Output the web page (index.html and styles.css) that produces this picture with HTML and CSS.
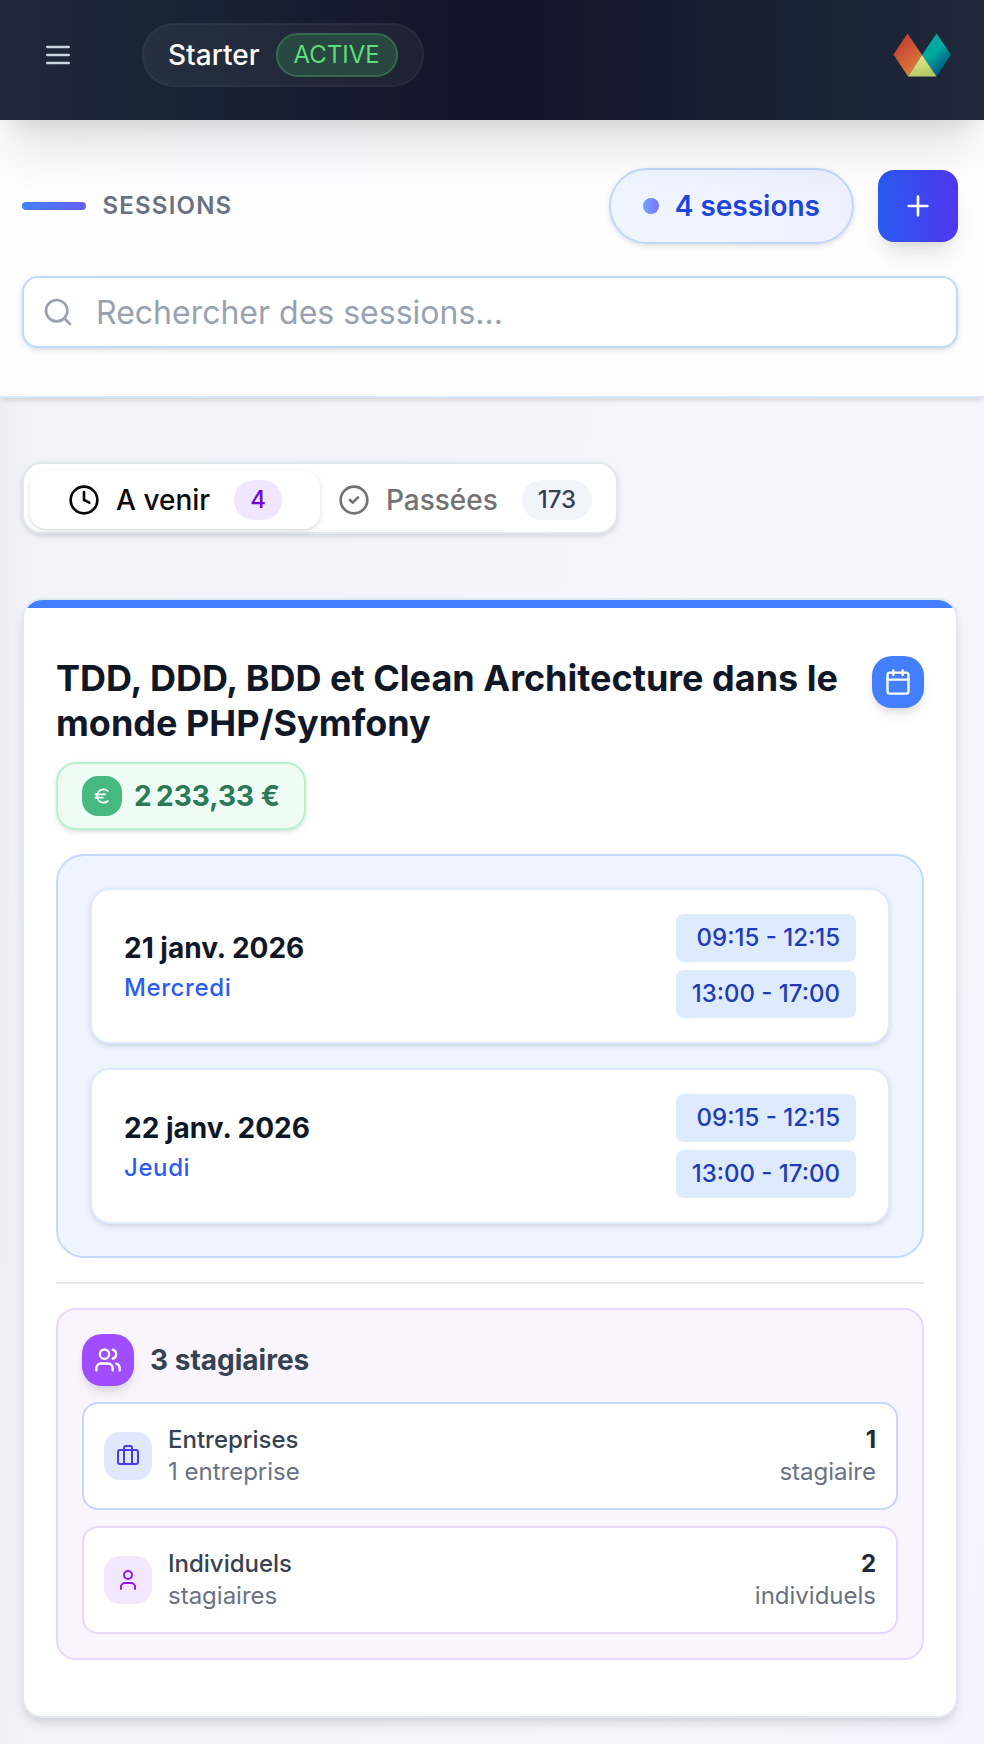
FILE: index.html
```html
<!DOCTYPE html>
<html lang="fr">
<head>
  <meta charset="utf-8">
  <title>Sessions</title>
  <link rel="stylesheet" href="styles.css">
</head>

<body>
  <header class="topbar">
    <button class="menu-button" aria-label="Menu">
      <svg class="icon icon-32" viewBox="0 0 24 24"><path d="M4 6h16M4 12h16M4 18h16"/></svg>
    </button>
    <div class="plan">
      <span class="plan-name">Starter</span>
      <span class="plan-status">ACTIVE</span>
    </div>
    <div class="logo">
      <svg width="58" height="44" viewBox="0 0 58 44">
        <defs>
          <linearGradient id="red" x1="0" y1="0" x2="0.6" y2="1">
            <stop offset="0.3" stop-color="#c74634"/>
            <stop offset="1" stop-color="#dc7c3c"/>
          </linearGradient>
          <linearGradient id="teal" x1="0.2" y1="0.2" x2="0.7" y2="1">
            <stop offset="0.35" stop-color="#00a9a0"/>
            <stop offset="0.9" stop-color="#005580"/>
          </linearGradient>
          <linearGradient id="yellow" x1="0" y1="0" x2="0.3" y2="1">
            <stop offset="0.2" stop-color="#e3e58c"/>
            <stop offset="1" stop-color="#b5cc66"/>
          </linearGradient>
        </defs>
        <path d="M14.5 0.5L29 22L15 43.5L0.5 21.5z" fill="url(#red)"/>
        <path d="M43.5 0.5L58 21.5L43.5 43.5L29 22z" fill="url(#teal)"/>
        <path d="M29 22L43.5 43.5H15z" fill="url(#yellow)"/>
      </svg>
    </div>
  </header>

  <section class="page-header">
    <div class="title-row">
      <span class="accent"></span>
      <h1 class="page-title">SESSIONS</h1>
      <div class="count"><span class="dot"></span>4 sessions</div>
      <button class="add-button" aria-label="Ajouter">
        <svg class="icon icon-32" viewBox="0 0 24 24"><path d="M5 12h14M12 5v14"/></svg>
      </button>
    </div>
    <div class="search">
      <svg class="icon icon-32" viewBox="0 0 24 24"><circle cx="11" cy="11" r="8"/><path d="m21 21-4.3-4.3"/></svg>
      <input type="text" placeholder="Rechercher des sessions...">
    </div>
  </section>

  <main class="content">
    <div class="tabs">
      <button class="tab active">
        <svg class="icon icon-32" viewBox="0 0 24 24"><circle cx="12" cy="12" r="10"/><path d="M12 6v6l4 2"/></svg>
        <span>A venir</span>
        <span class="tab-count">4</span>
      </button>
      <button class="tab">
        <svg class="icon icon-32" viewBox="0 0 24 24"><circle cx="12" cy="12" r="10"/><path d="m9 12 2 2 4-4"/></svg>
        <span>Passées</span>
        <span class="tab-count">173</span>
      </button>
    </div>

    <article class="card">
      <div class="card-head">
        <h2>TDD, DDD, BDD et Clean Architecture dans le monde PHP/Symfony</h2>
        <div class="badge badge-blue">
          <svg class="icon icon-28" viewBox="0 0 24 24"><path d="M8 2v4M16 2v4M3 10h18"/><rect x="3" y="4" width="18" height="18" rx="2"/></svg>
        </div>
      </div>

      <div class="price">
        <span class="price-icon">
          <svg class="icon icon-20" viewBox="0 0 24 24"><path d="M4 10h12M4 14h9M19 6a7.7 7.7 0 0 0-5.2-2A7.9 7.9 0 0 0 6 12c0 4.4 3.5 8 7.8 8 2 0 3.8-.8 5.2-2"/></svg>
        </span>
        <span class="price-value">2&#8239;233,33&nbsp;€</span>
      </div>

      <div class="dates">
        <div class="date">
          <div>
            <div class="day">21 janv. 2026</div>
            <div class="weekday">Mercredi</div>
          </div>
          <div class="slots">
            <span class="slot">09:15 - 12:15</span>
            <span class="slot">13:00 - 17:00</span>
          </div>
        </div>
        <div class="date">
          <div>
            <div class="day">22 janv. 2026</div>
            <div class="weekday">Jeudi</div>
          </div>
          <div class="slots">
            <span class="slot">09:15 - 12:15</span>
            <span class="slot">13:00 - 17:00</span>
          </div>
        </div>
      </div>

      <hr>

      <div class="trainees">
        <div class="trainees-head">
          <div class="badge badge-purple">
            <svg class="icon icon-28" viewBox="0 0 24 24"><path d="M16 21v-2a4 4 0 0 0-4-4H6a4 4 0 0 0-4 4v2"/><circle cx="9" cy="7" r="4"/><path d="M22 21v-2a4 4 0 0 0-3-3.87M16 3.13a4 4 0 0 1 0 7.75"/></svg>
          </div>
          <h3>3 stagiaires</h3>
        </div>

        <div class="row row-company">
          <div class="row-icon">
            <svg class="icon icon-24" viewBox="0 0 24 24"><path d="M16 20V4a2 2 0 0 0-2-2h-4a2 2 0 0 0-2 2v16"/><rect x="2" y="6" width="20" height="14" rx="2"/></svg>
          </div>
          <div class="row-text">
            <div class="row-label">Entreprises</div>
            <div>1 entreprise</div>
          </div>
          <div class="row-total">
            <div class="row-number">1</div>
            <div>stagiaire</div>
          </div>
        </div>

        <div class="row row-person">
          <div class="row-icon">
            <svg class="icon icon-24" viewBox="0 0 24 24"><path d="M19 21v-2a4 4 0 0 0-4-4H9a4 4 0 0 0-4 4v2"/><circle cx="12" cy="7" r="4"/></svg>
          </div>
          <div class="row-text">
            <div class="row-label">Individuels</div>
            <div>stagiaires</div>
          </div>
          <div class="row-total">
            <div class="row-number">2</div>
            <div>individuels</div>
          </div>
        </div>
      </div>
    </article>
  </main>
</body>

</html>
```

FILE: styles.css
```css
* {
  box-sizing: border-box;
}

body {
  margin: 0;
  height: 1744px;
  overflow: hidden;
  font-family: Inter, sans-serif;
  font-size: 24px;
  color: #101828;
  background: linear-gradient(90deg, rgba(0, 0, 0, 0.015), rgba(0, 0, 0, 0) 36px),
    linear-gradient(100deg, #f2f2f8, #f4f3fc 35%, #f7f6fd 75%, #f5f3fe);
}

button {
  font-family: inherit;
  border: none;
  padding: 0;
  background: none;
  cursor: pointer;
}

h1,
h2,
h3 {
  margin: 0;
}

.icon {
  display: block;
  flex-shrink: 0;
  fill: none;
  stroke: currentColor;
  stroke-width: 2;
  stroke-linecap: round;
  stroke-linejoin: round;
}

.icon-20 {
  width: 20px;
  height: 20px;
}

.icon-24 {
  width: 24px;
  height: 24px;
}

.icon-28 {
  width: 28px;
  height: 28px;
}

.icon-32 {
  width: 32px;
  height: 32px;
}

/* Top bar */
.topbar {
  position: relative;
  z-index: 1;
  display: flex;
  align-items: center;
  height: 120px;
  padding: 0 30px 10px 42px;
  background: linear-gradient(90deg, #20273a, #1a2435 16%, #111428 50%, #1a2435 86%, #20273a);
  box-shadow: 0 40px 50px -10px rgba(0, 0, 0, 0.1), 0 16px 20px -12px rgba(0, 0, 0, 0.1);
}

.menu-button {
  color: #cad5e2;
}

.plan {
  display: flex;
  align-items: center;
  gap: 16px;
  height: 64px;
  margin-left: 68px;
  padding: 0 24px;
  border: 2px solid rgba(255, 255, 255, 0.04);
  border-radius: 32px;
  background: rgba(255, 255, 255, 0.05);
}

.plan-name {
  font-size: 28px;
  font-weight: 500;
  color: #fff;
}

.plan-status {
  height: 44px;
  line-height: 40px;
  padding: 0 16px;
  border: 2px solid #356b4e;
  border-radius: 22px;
  color: #5fdd7c;
  background: #294741;
}

.logo {
  display: flex;
  align-items: center;
  justify-content: center;
  width: 64px;
  height: 64px;
  margin-left: auto;
  border-radius: 50%;
}

/* Page header */
.page-header {
  height: 278px;
  padding: 48px 26px 48px 22px;
  border-bottom: 2px solid #dbe8fb;
  background: rgba(255, 255, 255, 0.85);
  box-shadow: 0 2px 6px rgba(0, 0, 0, 0.1), 0 2px 4px -2px rgba(0, 0, 0, 0.1);
}

.title-row {
  display: flex;
  align-items: center;
  height: 76px;
}

.accent {
  width: 64px;
  height: 8px;
  border-radius: 4px;
  background: linear-gradient(90deg, #4380fb, #645ff6);
}

.page-title {
  margin-left: 16.5px;
  padding-bottom: 2px;
  font-size: 24px;
  font-weight: 600;
  letter-spacing: 1.2px;
  color: #6a7282;
}

.count {
  display: flex;
  align-items: center;
  gap: 16px;
  height: 76px;
  margin-left: auto;
  padding: 0 32px;
  border: 2px solid #bfd8fc;
  border-radius: 38px;
  font-size: 28px;
  font-weight: 600;
  color: #2145dc;
  background: linear-gradient(90deg, #eff6ff, #eef0ff);
  box-shadow: 0 2px 6px rgba(0, 0, 0, 0.1), 0 2px 4px -2px rgba(0, 0, 0, 0.1);
}

.dot {
  width: 16px;
  height: 16px;
  border-radius: 50%;
  background: linear-gradient(90deg, #73a4fb, #7c72fb);
}

.add-button {
  display: flex;
  align-items: center;
  justify-content: center;
  width: 80px;
  height: 72px;
  margin-left: 24px;
  border-radius: 16px;
  color: #fff;
  background: linear-gradient(90deg, #2a5bf0, #4f37ee);
  box-shadow: 0 16px 24px -6px rgba(0, 0, 0, 0.12), 0 6px 10px -6px rgba(0, 0, 0, 0.1);
}

.search {
  display: flex;
  align-items: center;
  gap: 22px;
  height: 72px;
  margin-top: 32px;
  padding: 0 18px;
  border: 2px solid #bedbff;
  border-radius: 16px;
  color: #99a1af;
  background: #fff;
  box-shadow: 0 2px 6px rgba(0, 0, 0, 0.1), 0 2px 4px -2px rgba(0, 0, 0, 0.1);
}

.search input {
  flex: 1;
  padding: 0;
  border: none;
  outline: none;
  font-family: inherit;
  font-size: 32px;
  background: none;
}

.search input::placeholder {
  color: #99a1af;
}

/* Tabs */
.content {
  padding: 64px 26px 26px 22px;
}

.tabs {
  display: grid;
  grid-template-columns: 1fr 1fr;
  width: 596px;
  height: 72px;
  padding: 7px 6px 3px;
  border: 2px solid #e2e8f0;
  border-radius: 20px;
  background: #fff;
  box-shadow: 0 2px 6px rgba(0, 0, 0, 0.1), 0 2px 4px -2px rgba(0, 0, 0, 0.1);
}

.tab {
  display: flex;
  align-items: center;
  justify-content: center;
  gap: 16px;
  border-radius: 16px;
  font-size: 28px;
  font-weight: 500;
  color: #737373;
}

.tab.active {
  color: #0a0a0a;
  box-shadow: 0 2px 6px rgba(0, 0, 0, 0.1), 0 2px 4px -2px rgba(0, 0, 0, 0.1);
}

.tab-count {
  height: 40px;
  line-height: 40px;
  margin-left: 8px;
  padding: 0 16px;
  border-radius: 20px;
  font-size: 24px;
  color: #314158;
  background: #f1f5f9;
}

.tab.active .tab-count {
  color: #7008d8;
  background: #f1e6fe;
}

/* Session card */
.card {
  height: 1120px;
  margin-top: 64px;
  padding: 48px 32px 56px;
  border: 2px solid #e2e8f0;
  border-radius: 20px;
  background: linear-gradient(#437ffc, #437ffc) top / 100% 8px no-repeat padding-box, #fff;
  box-shadow: 0 8px 12px -2px rgba(0, 0, 0, 0.1), 0 4px 8px -4px rgba(0, 0, 0, 0.1);
}

.card-head {
  display: flex;
  align-items: flex-start;
  justify-content: space-between;
  gap: 24px;
  margin-top: 8px;
}

.card-head h2 {
  font-size: 36px;
  font-weight: 700;
  line-height: 45px;
}

.badge {
  display: flex;
  align-items: center;
  justify-content: center;
  flex-shrink: 0;
  width: 52px;
  height: 52px;
  border-radius: 20px;
  color: #fff;
  box-shadow: 0 8px 12px -2px rgba(0, 0, 0, 0.1), 0 4px 8px -4px rgba(0, 0, 0, 0.1);
}

.badge-blue {
  background: #437ffc;
}

.badge-purple {
  background: #a04dfd;
}

.price {
  display: flex;
  align-items: center;
  gap: 12px;
  width: fit-content;
  height: 68px;
  margin-top: 16px;
  padding: 0 24px;
  border: 2px solid #b8f3d1;
  border-radius: 20px;
  font-size: 28px;
  font-weight: 700;
  color: #2a7a58;
  background: #effcf5;
  box-shadow: 0 2px 6px rgba(0, 0, 0, 0.1), 0 2px 4px -2px rgba(0, 0, 0, 0.1);
}

.price-value {
  letter-spacing: -0.15px;
}

.price-icon {
  display: flex;
  align-items: center;
  justify-content: center;
  width: 40px;
  height: 40px;
  border-radius: 16px;
  color: #fff;
  background: #46b981;
}

.dates {
  display: flex;
  flex-direction: column;
  gap: 24px;
  margin-top: 24px;
  padding: 32px;
  border: 2px solid #c1dafd;
  border-radius: 28px;
  background: #eef5fe;
}

.date {
  display: flex;
  align-items: center;
  justify-content: space-between;
  padding: 24px 32px;
  border: 2px solid #dde9fe;
  border-radius: 20px;
  background: #fff;
  box-shadow: 0 2px 6px rgba(0, 0, 0, 0.1), 0 2px 4px -2px rgba(0, 0, 0, 0.1);
}

.day {
  font-size: 28px;
  font-weight: 700;
  line-height: 44px;
}

.weekday {
  font-weight: 500;
  line-height: 36px;
  letter-spacing: 0.6px;
  color: #2b5df6;
}

.slots {
  display: flex;
  flex-direction: column;
  gap: 8px;
}

.slot {
  height: 48px;
  line-height: 48px;
  padding: 0 16px;
  border-radius: 8px;
  font-weight: 500;
  text-align: right;
  color: #213bb5;
  background: #deeafe;
}

hr {
  height: 2px;
  margin: 24px 0;
  border: none;
  background: #e5e7eb;
}

/* Trainees */
.trainees {
  padding: 24px;
  border: 2px solid #e7d6fd;
  border-radius: 20px;
  background: #f8f5fe;
}

.trainees-head {
  display: flex;
  align-items: center;
  gap: 16px;
}

.trainees-head h3 {
  font-size: 28px;
  font-weight: 700;
  color: #364153;
}

.row {
  display: flex;
  align-items: center;
  gap: 16px;
  height: 108px;
  margin-top: 16px;
  padding: 0 20px;
  border: 2px solid #c8d3fe;
  border-radius: 16px;
  line-height: 32px;
  color: #6a7282;
  background: #fff;
}

.row-person {
  border-color: #e7d6fd;
}

.row-icon {
  display: flex;
  align-items: center;
  justify-content: center;
  width: 48px;
  height: 48px;
  border-radius: 16px;
  color: #4d39ee;
  background: #e0e7fe;
}

.row-person .row-icon {
  color: #9118f4;
  background: #f1e7fe;
}

.row-label {
  font-weight: 500;
  color: #364153;
}

.row-total {
  margin-left: auto;
  text-align: right;
}

.row-number {
  font-weight: 700;
  color: #1e2939;
}
```
